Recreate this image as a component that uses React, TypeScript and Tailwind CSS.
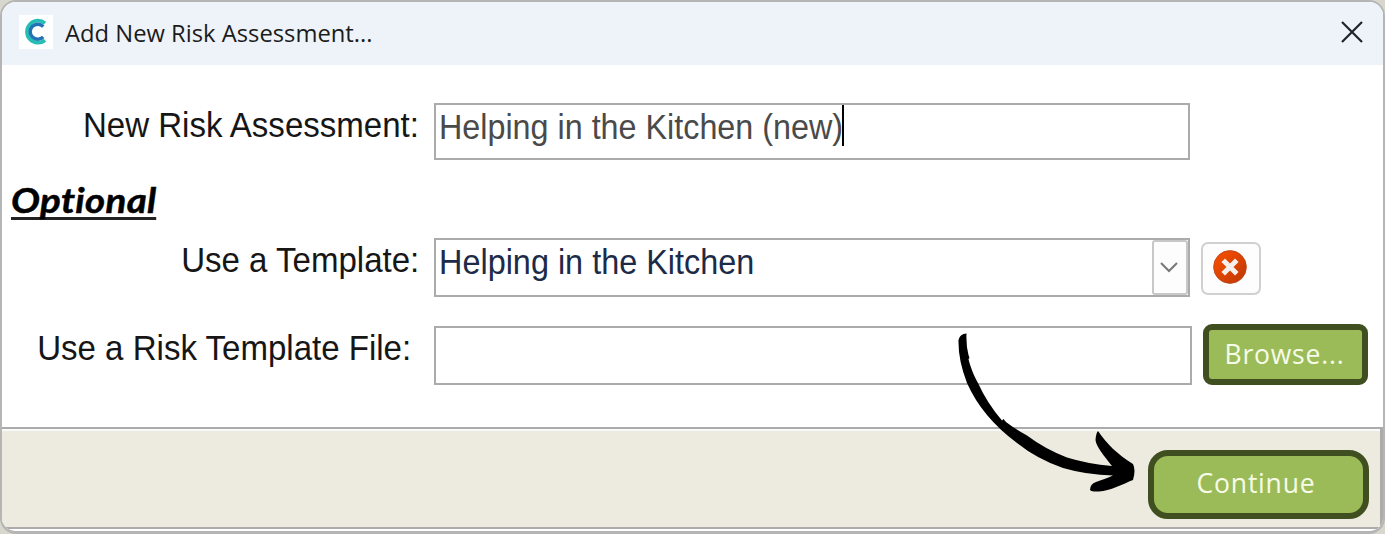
import type { ReactNode } from "react";

const UI_FONT = "font-['Open_Sans','Noto_Sans',sans-serif]";
const FIELD_FONT = "font-['Liberation_Sans',Arial,sans-serif]";

interface LabelProps {
  className: string;
  children: ReactNode;
}

function Label({ className, children }: LabelProps) {
  return (
    <label className={`shrink-0 text-right ${className}`}>
      <span className="inline-block origin-right scale-x-[0.944]">{children}</span>
    </label>
  );
}

function Logo() {
  return (
    <svg width="34" height="34" viewBox="0 0 34 34" fill="none" className="shrink-0 bg-white">
      <path d="M26 8.2A11 11 0 1 0 26 25.2" stroke="#25bdb4" strokeWidth="3.8" />
      <path d="M24.2 11.6A7.5 7.5 0 1 0 24.2 21.8" stroke="#2273b5" strokeWidth="3.4" />
    </svg>
  );
}

function ErrorIcon() {
  return (
    <svg width="36" height="36" viewBox="0 0 36 36" fill="none">
      <defs>
        <linearGradient id="red" x1="0" y1="0" x2="1" y2="1">
          <stop offset="0.2" stopColor="#f04c00" />
          <stop offset="0.8" stopColor="#c93c02" />
        </linearGradient>
      </defs>
      <circle cx="18" cy="18" r="16.4" fill="url(#red)" stroke="#b8401a" strokeWidth="0.8" />
      <path d="M11.2 11.2l13.6 13.6M24.8 11.2L11.2 24.8" stroke="#f5f0ed" strokeWidth="5" />
    </svg>
  );
}

function Arrow() {
  return (
    <svg
      width="200"
      height="180"
      viewBox="950 325 200 180"
      className="pointer-events-none absolute left-[950px] top-[325px]"
    >
      <path d="M958.5 340Q960 333.5 966.5 333.5Q966 346 968.5 355L969.5 358L968.5 359C970 366 974 376 978 383Q987 403 1002 420.5L1003.5 419L1006 422Q1015 429 1027 435.5Q1045 449 1067 457.5Q1088 464 1112 466C1104 456 1096 446 1095.5 440Q1096 433 1098 431C1107 444 1117 454 1133 464Q1136 470 1133 480C1123 484 1110 491 1099 491.5Q1092 492 1090 490Q1090 484 1096 482C1101 480 1108 478 1113 475.5Q1087 475 1063 468Q1037 459 1017 443Q982 417 967 383Q958 360 958.5 340Z" />
    </svg>
  );
}

export default function App() {
  return (
    <div className="relative h-[534px] w-[1385px] overflow-hidden bg-[#d8d7ce]">
      <div className="flex h-full flex-col overflow-hidden rounded-[16px] border-x-2 border-b-[3px] border-t-2 border-[#b5b5b5] bg-white">
        {/* Title bar */}
        <div className="flex h-[63px] shrink-0 items-center bg-[#eef3fa] pb-[3px] pl-[17px] pr-[20px]">
          <Logo />
          <h1 className={`ml-[12px] mt-[2px] origin-left scale-x-[0.99] whitespace-nowrap text-[24px] leading-none text-[#1b1b1b] ${UI_FONT}`}>
            Add New Risk Assessment...
          </h1>
          <button className="ml-auto" aria-label="Close">
            <svg width="22" height="22" viewBox="0 0 22 22" stroke="#202428" strokeWidth="2.2">
              <path d="M1 1l20 20M21 1L1 21" />
            </svg>
          </button>
        </div>

        {/* Form */}
        <div className={`h-[362px] shrink-0 pt-[38px] text-[35px] leading-[40px] text-[#161616] ${FIELD_FONT}`}>
          <div className="flex">
            <Label className="w-[417px] pt-[2px]">New Risk Assessment:</Label>
            <div className="ml-[15px] flex h-[57px] w-[756px] border-2 border-[#ababab] pl-[3px] text-[#4a4a4a]">
              <span className="mt-[2px] origin-left scale-x-[0.923] whitespace-nowrap">Helping in the Kitchen (new)</span>
              <span className="-ml-[35px] h-[41px] w-[2px] bg-black" />
            </div>
          </div>

          <h2 className="ml-[9px] mt-[18px] h-[42px] font-['Lato',sans-serif] text-[35px] font-bold italic leading-[42px] text-black">
            <span className="inline-block origin-left scale-x-[1.1] border-b-[3px] border-[#222] leading-[36px] tracking-[0.3px] [-webkit-text-stroke:0.5px_black] [font-variant-ligatures:none]">
              Optional
            </span>
          </h2>

          <div className="mt-[18px] flex">
            <Label className="w-[417px] pt-[2px]">Use a Template:</Label>
            <div className="ml-[15px] flex h-[59px] w-[756px] border-2 border-[#ababab] pl-[3px] text-[#1c2b48]">
              <span className="mt-[2px] origin-left scale-x-[0.926] whitespace-nowrap">Helping in the Kitchen</span>
              <span className="ml-auto flex h-[55px] w-[36px] items-center justify-center rounded-[3px] border-2 border-[#c8c8c8] bg-[#fdfdfd] pr-[2px]">
                <svg width="18" height="11" viewBox="0 0 18 11" fill="none" stroke="#777" strokeWidth="2">
                  <path d="M1 1l8 8 8-8" />
                </svg>
              </span>
            </div>
            <button className="ml-[11px] mt-[4px] flex h-[53px] w-[60px] items-center justify-center rounded-[7px] border-2 border-[#d0d0d0] bg-[#fdfdfd] pb-[3px] pr-[2px]">
              <ErrorIcon />
            </button>
          </div>

          <div className="mt-[27px] flex">
            <Label className="w-[409px] pt-[4px]">Use a Risk Template File:</Label>
            <div className="ml-[23px] mt-[2px] h-[59px] w-[758px] border-2 border-[#ababab]" />
            <button className={`ml-[11px] flex h-[61px] w-[165px] items-center justify-center rounded-[9px] border-6 border-[#3f4f20] bg-[#9bbb59] pb-[2px] pr-[2px] text-[26.5px] tracking-[0.8px] text-[#f7fbe9] ${UI_FONT}`}>
              Browse...
            </button>
          </div>
        </div>

        {/* Footer */}
        <div className="flex h-[102px] w-full shrink-0 justify-end border-b-2 border-r-[3px] border-t-2 border-[#ababab] bg-[#edebe0] pr-[11px] pt-[21px] shadow-[inset_0_2px_0_#fafafa]">
          <button className={`flex h-[69px] w-[221px] items-center justify-center rounded-[20px] border-6 border-[#3f4f20] bg-[#9bbb59] pb-px pr-[5px] text-[26.5px] tracking-[0.8px] text-[#f7fbe9] ${UI_FONT}`}>
            Continue
          </button>
        </div>
      </div>
      <Arrow />
    </div>
  );
}
